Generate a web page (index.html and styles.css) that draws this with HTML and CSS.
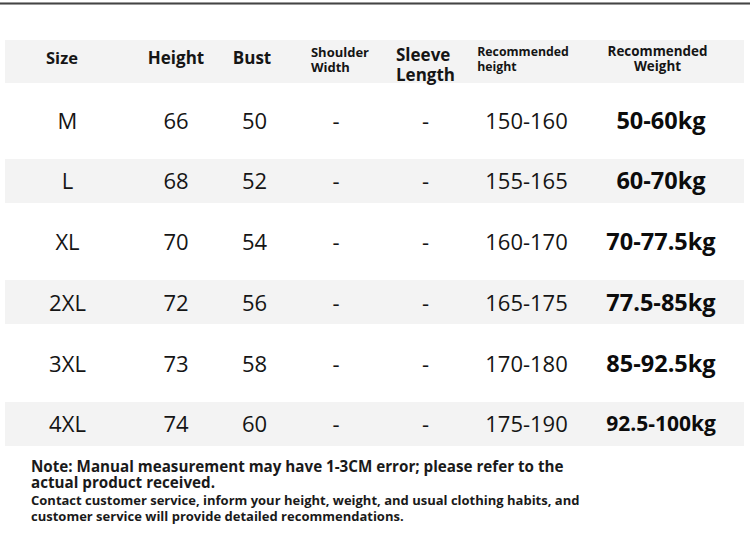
FILE: index.html
```html
<!DOCTYPE html>
<html lang="en">
<head>
<meta charset="utf-8">
<title>Size chart</title>
<link rel="stylesheet" href="styles.css">
</head>
<body>
<div class="topline"></div>
<div class="chart">
  <div class="row head">
    <div class="cell"><span class="h-big h-size">Size</span></div>
    <div class="cell"><span class="h-big h-one">Height</span></div>
    <div class="cell"><span class="h-big h-one h-bust">Bust</span></div>
    <div class="cell"><span class="h-small h-shoulder">Shoulder<br>Width</span></div>
    <div class="cell"><span class="h-big h-sleeve">Sleeve<br>Length</span></div>
    <div class="cell"><span class="h-small h-rech">Recommended<br>height</span></div>
    <div class="cell"><span class="h-small h-recw">Recommended<br>Weight</span></div>
  </div>
  <div class="row">
    <div class="cell">M</div><div class="cell">66</div><div class="cell">50</div><div class="cell">-</div><div class="cell">-</div><div class="cell">150-160</div><div class="cell kg">50-60kg</div>
  </div>
  <div class="row alt">
    <div class="cell">L</div><div class="cell">68</div><div class="cell">52</div><div class="cell">-</div><div class="cell">-</div><div class="cell">155-165</div><div class="cell kg">60-70kg</div>
  </div>
  <div class="row">
    <div class="cell">XL</div><div class="cell">70</div><div class="cell">54</div><div class="cell">-</div><div class="cell">-</div><div class="cell">160-170</div><div class="cell kg">70-77.5kg</div>
  </div>
  <div class="row alt">
    <div class="cell">2XL</div><div class="cell">72</div><div class="cell">56</div><div class="cell">-</div><div class="cell">-</div><div class="cell">165-175</div><div class="cell kg">77.5-85kg</div>
  </div>
  <div class="row">
    <div class="cell">3XL</div><div class="cell">73</div><div class="cell">58</div><div class="cell">-</div><div class="cell">-</div><div class="cell">170-180</div><div class="cell kg">85-92.5kg</div>
  </div>
  <div class="row alt">
    <div class="cell">4XL</div><div class="cell">74</div><div class="cell">60</div><div class="cell">-</div><div class="cell">-</div><div class="cell">175-190</div><div class="cell kg kg-small">92.5-100kg</div>
  </div>
</div>
<div class="notes">
  <p class="note">Note: Manual measurement may have 1-3CM error; please refer to the<br>actual product received.</p>
  <p class="contact">Contact customer service, inform your height, weight, and usual clothing habits, and<br>customer service will provide detailed recommendations.</p>
</div>
</body>
</html>
```
FILE: styles.css
```css
html, body {
  margin: 0;
  padding: 0;
  background: #ffffff;
}

body {
  width: 750px;
  height: 538px;
  overflow: hidden;
  font-family: "Open Sans", "Noto Sans", sans-serif;
  color: #151515;
}

.topline {
  margin-top: 2px;
  height: 3px;
  background: linear-gradient(to bottom, #9a9a9a 0, #9a9a9a 1px, #444 1px, #444 2px, #9a9a9a 2px);
}

.chart {
  margin: 35px 0 0 5px;
  width: 739px;
  display: flex;
  flex-direction: column;
  gap: 16.75px;
}

.row {
  display: grid;
  grid-template-columns: 125px 92px 65px 98px 81px 121px 148px 1fr;
  height: 44px;
  align-items: center;
  font-size: 22px;
  font-weight: 400;
}

.row.head {
  height: 43px;
  background: #f3f3f3;
  margin-bottom: -1.75px;
  font-weight: 700;
}

.row.alt {
  background: #f3f3f3;
}

.cell {
  display: flex;
  justify-content: center;
  align-items: center;
  line-height: 26px;
  white-space: nowrap;
  padding-bottom: 1px;
}

.h-big {
  font-size: 17px;
  line-height: 20px;
}

.h-one {
  padding-bottom: 10px;
}

.h-size {
  font-size: 16.5px;
  padding-bottom: 10px;
  padding-right: 11px;
}

.h-bust {
  padding-right: 5px;
}

.h-small {
  font-size: 13px;
  line-height: 15px;
}

.h-shoulder {
  text-align: left;
  padding-left: 8px;
  padding-bottom: 6px;
}

.h-sleeve {
  text-align: left;
  padding-top: 5px;
}

.h-rech {
  text-align: left;
  font-size: 12.3px;
  padding-right: 7px;
  padding-bottom: 8px;
}

.h-recw {
  text-align: center;
  font-size: 13.4px;
  padding-right: 7px;
  padding-bottom: 8px;
}

.kg {
  font-weight: 700;
  font-size: 23.5px;
  color: #0c0c0c;
}

.kg-small {
  font-size: 21px;
}

.notes {
  margin: 12px 0 0 31px;
  font-weight: 700;
  color: #1a1a1a;
}

.note {
  margin: 0;
  font-size: 15.2px;
  line-height: 16px;
}

.contact {
  margin: 2px 0 0;
  font-size: 13px;
  line-height: 16px;
}
```
